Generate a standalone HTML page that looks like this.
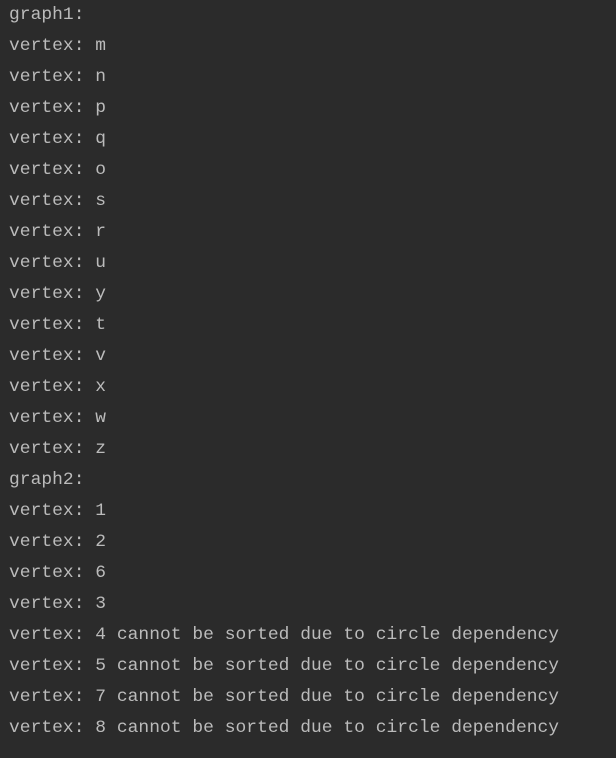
<!DOCTYPE html>
<html><head><meta charset="utf-8"><style>
html,body{margin:0;padding:0;background:#2b2b2b;width:616px;height:758px;overflow:hidden}
pre{margin:0;padding:0 0 0 9px;position:relative;top:0px;font-family:"Liberation Mono",monospace;font-size:17.9px;letter-spacing:0.05px;line-height:31px;color:#bbbbbb}
</style></head><body><pre>graph1:
vertex: m
vertex: n
vertex: p
vertex: q
vertex: o
vertex: s
vertex: r
vertex: u
vertex: y
vertex: t
vertex: v
vertex: x
vertex: w
vertex: z
graph2:
vertex: 1
vertex: 2
vertex: 6
vertex: 3
vertex: 4 cannot be sorted due to circle dependency
vertex: 5 cannot be sorted due to circle dependency
vertex: 7 cannot be sorted due to circle dependency
vertex: 8 cannot be sorted due to circle dependency</pre></body></html>
